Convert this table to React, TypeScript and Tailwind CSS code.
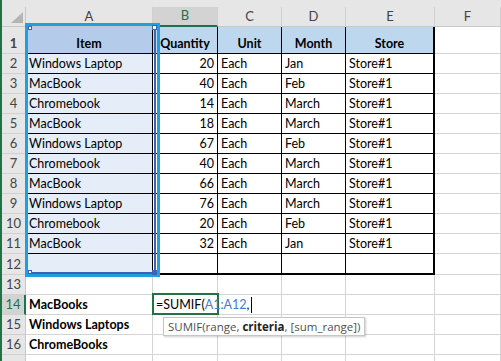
import React from "react";

type Row = [string, number, string, string, string];

const data: Row[] = [
  ["Windows Laptop", 20, "Each", "Jan", "Store#1"],
  ["MacBook", 40, "Each", "Feb", "Store#1"],
  ["Chromebook", 14, "Each", "March", "Store#1"],
  ["MacBook", 18, "Each", "March", "Store#1"],
  ["Windows Laptop", 67, "Each", "Feb", "Store#1"],
  ["Chromebook", 40, "Each", "March", "Store#1"],
  ["MacBook", 66, "Each", "March", "Store#1"],
  ["Windows Laptop", 76, "Each", "March", "Store#1"],
  ["Chromebook", 20, "Each", "Feb", "Store#1"],
  ["MacBook", 32, "Each", "Jan", "Store#1"],
];

// column widths incl. right border: A B C D E F rest
const colW = ["w-[127px]", "w-[65px]", "w-[64px]", "w-[64px]", "w-[89px]", "w-[66px]", "w-[1px]"];

function RowHead({ n, active }: { n: number | string; active?: boolean }) {
  return (
    <div
      className={
        "w-[24px] shrink-0 flex items-end justify-center text-[13px] leading-[17px] pb-[1px] border-b border-[#d0d0d0] " +
        (active
          ? "bg-[#d3d3d3] text-[#217346] border-r-2 border-r-[#217346]"
          : "bg-[#e6e6e6] text-[#444] border-r border-r-[#c8c8c8]")
      }
    >
      {n}
    </div>
  );
}

function Cell({
  i,
  children,
  cls = "",
}: {
  i: number;
  children?: React.ReactNode;
  cls?: string;
}) {
  return (
    <div
      className={
        colW[i] +
        " shrink-0 flex items-end px-[3px] pb-[1px] leading-[16px] whitespace-nowrap " +
        cls
      }
    >
      {children}
    </div>
  );
}

const grid = "border-r border-b border-[#d4d4d4]";

export default function App() {
  return (
    <div
      className="relative w-[501px] h-[361px] overflow-hidden bg-white border-l-2 border-[#217346] text-[12.5px] text-black"
      style={{ fontFamily: "Lato, 'Liberation Sans', sans-serif" }}
    >
      <div className="h-[7px] bg-[#e6e6e6]" />
      {/* column headers */}
      <div className="flex h-[20px] bg-[#e6e6e6] text-[13px] text-[#444]">
        <div className="w-[24px] shrink-0 border-r border-b border-[#c8c8c8] flex items-end justify-end pr-[2px] pb-[3px]">
          <svg width="12" height="11" viewBox="0 0 12 11">
            <polygon points="12,0 12,11 0,11" fill="#b5b5b5" />
          </svg>
        </div>
        {["A", "B", "C", "D", "E", "F", ""].map((c, i) => (
          <div
            key={i}
            className={
              colW[i] +
              " shrink-0 flex items-center justify-center border-r border-[#d0d0d0] " +
              (c === "B"
                ? "bg-[#d3d3d3] text-[#217346] border-b-2 border-b-[#217346]"
                : "border-b border-b-[#c8c8c8]")
            }
          >
            {c}
          </div>
        ))}
      </div>

      {/* header row 1 */}
      <div className="flex h-[27px] font-bold">
        <RowHead n={1} />
        {["Item", "Quantity", "Unit", "Month", "Store"].map((h, i) => (
          <Cell
            key={h}
            i={i}
            cls={
              "justify-center border-b border-black " +
              (i === 4 ? "border-r-2 border-r-black " : "border-r border-r-black ") +
              (i === 0 ? "bg-[#b4cce9]" : "bg-[#bdd7ee]")
            }
          >
            {h}
          </Cell>
        ))}
        <Cell i={5} cls={grid} />
        <Cell i={6} cls={grid} />
      </div>

      {data.map((r, idx) => (
        <div key={idx} className="flex h-[20px]">
          <RowHead n={idx + 2} />
          <Cell i={0} cls="bg-[#e5edf8] border-r border-b border-black">
            {r[0]}
          </Cell>
          <Cell i={1} cls="justify-end border-r border-b border-black">
            {r[1]}
          </Cell>
          <Cell i={2} cls="border-r border-b border-black">
            {r[2]}
          </Cell>
          <Cell i={3} cls="border-r border-b border-black">
            {r[3]}
          </Cell>
          <Cell i={4} cls="border-r-2 border-b border-black">
            {r[4]}
          </Cell>
          <Cell i={5} cls={grid} />
          <Cell i={6} cls={grid} />
        </div>
      ))}

      {/* row 12 */}
      <div className="flex h-[21px]">
        <RowHead n={12} />
        <Cell i={0} cls="bg-[#e5edf8] border-r border-b-2 border-black" />
        <Cell i={1} cls="border-r border-b-2 border-black" />
        <Cell i={2} cls="border-r border-b-2 border-black" />
        <Cell i={3} cls="border-r border-b-2 border-black" />
        <Cell i={4} cls="border-r-2 border-b-2 border-black" />
        <Cell i={5} cls={grid} />
        <Cell i={6} cls={grid} />
      </div>

      {[13, 14, 15, 16, 17].map((n) => (
        <div key={n} className="flex h-[20px]">
          <RowHead n={n === 17 ? "" : n} active={n === 14} />
          <Cell i={0} cls={grid + " font-bold"}>
            {n === 14 ? "MacBooks" : n === 15 ? "Windows Laptops" : n === 16 ? "ChromeBooks" : ""}
          </Cell>
          <Cell i={1} cls={grid + " overflow-visible"}>
            {n === 14 && (
              <span className="relative z-10 flex items-end">
                =SUMIF(<span className="text-[#3d7fd6]">A1:A12</span>,
                <span className="inline-block w-[1px] h-[16px] bg-black ml-[2px]" />
              </span>
            )}
          </Cell>
          {[2, 3, 4, 5, 6].map((i) => (
            <Cell key={i} i={i} cls={grid} />
          ))}
        </div>
      ))}

      {/* range highlight around A1:A12 */}
      <div className="absolute left-[23px] top-[23px] w-[135px] h-[254px] border-[3px] border-[#1ba1e2] pointer-events-none" />
      <div className="absolute left-[26px] top-[26px] w-[128px] h-[248px] border-r-2 border-b-2 border-[#3b63b5] pointer-events-none" />
      <div className="absolute left-[26px] top-[26px] w-[4px] h-[4px] bg-white border border-[#3b63b5]" />
      <div className="absolute left-[150px] top-[25px] w-[5px] h-[5px] bg-white border border-[#3b63b5]" />
      <div className="absolute left-[26px] top-[270px] w-[4px] h-[4px] bg-white border border-[#3b63b5]" />
      <div className="absolute left-[150px] top-[270px] w-[5px] h-[5px] bg-[#3b63b5]" />

      {/* active cell B14 */}
      <div className="absolute left-[150px] top-[293px] w-[67px] h-[22px] border-2 border-[#217346] pointer-events-none" />

      {/* function tooltip */}
      <div
        className="absolute left-[161px] top-[317px] h-[19px] px-[4px] flex items-center bg-white border border-[#c6c6c6] shadow-[1px_1px_2px_rgba(0,0,0,0.2)] text-[11.5px] text-[#505050] whitespace-nowrap"
        style={{ fontFamily: "'Open Sans', 'Noto Sans', sans-serif" }}
      >
        SUMIF(range,&nbsp;<b className="text-[#222]">criteria</b>, [sum_range])
      </div>
    </div>
  );
}
